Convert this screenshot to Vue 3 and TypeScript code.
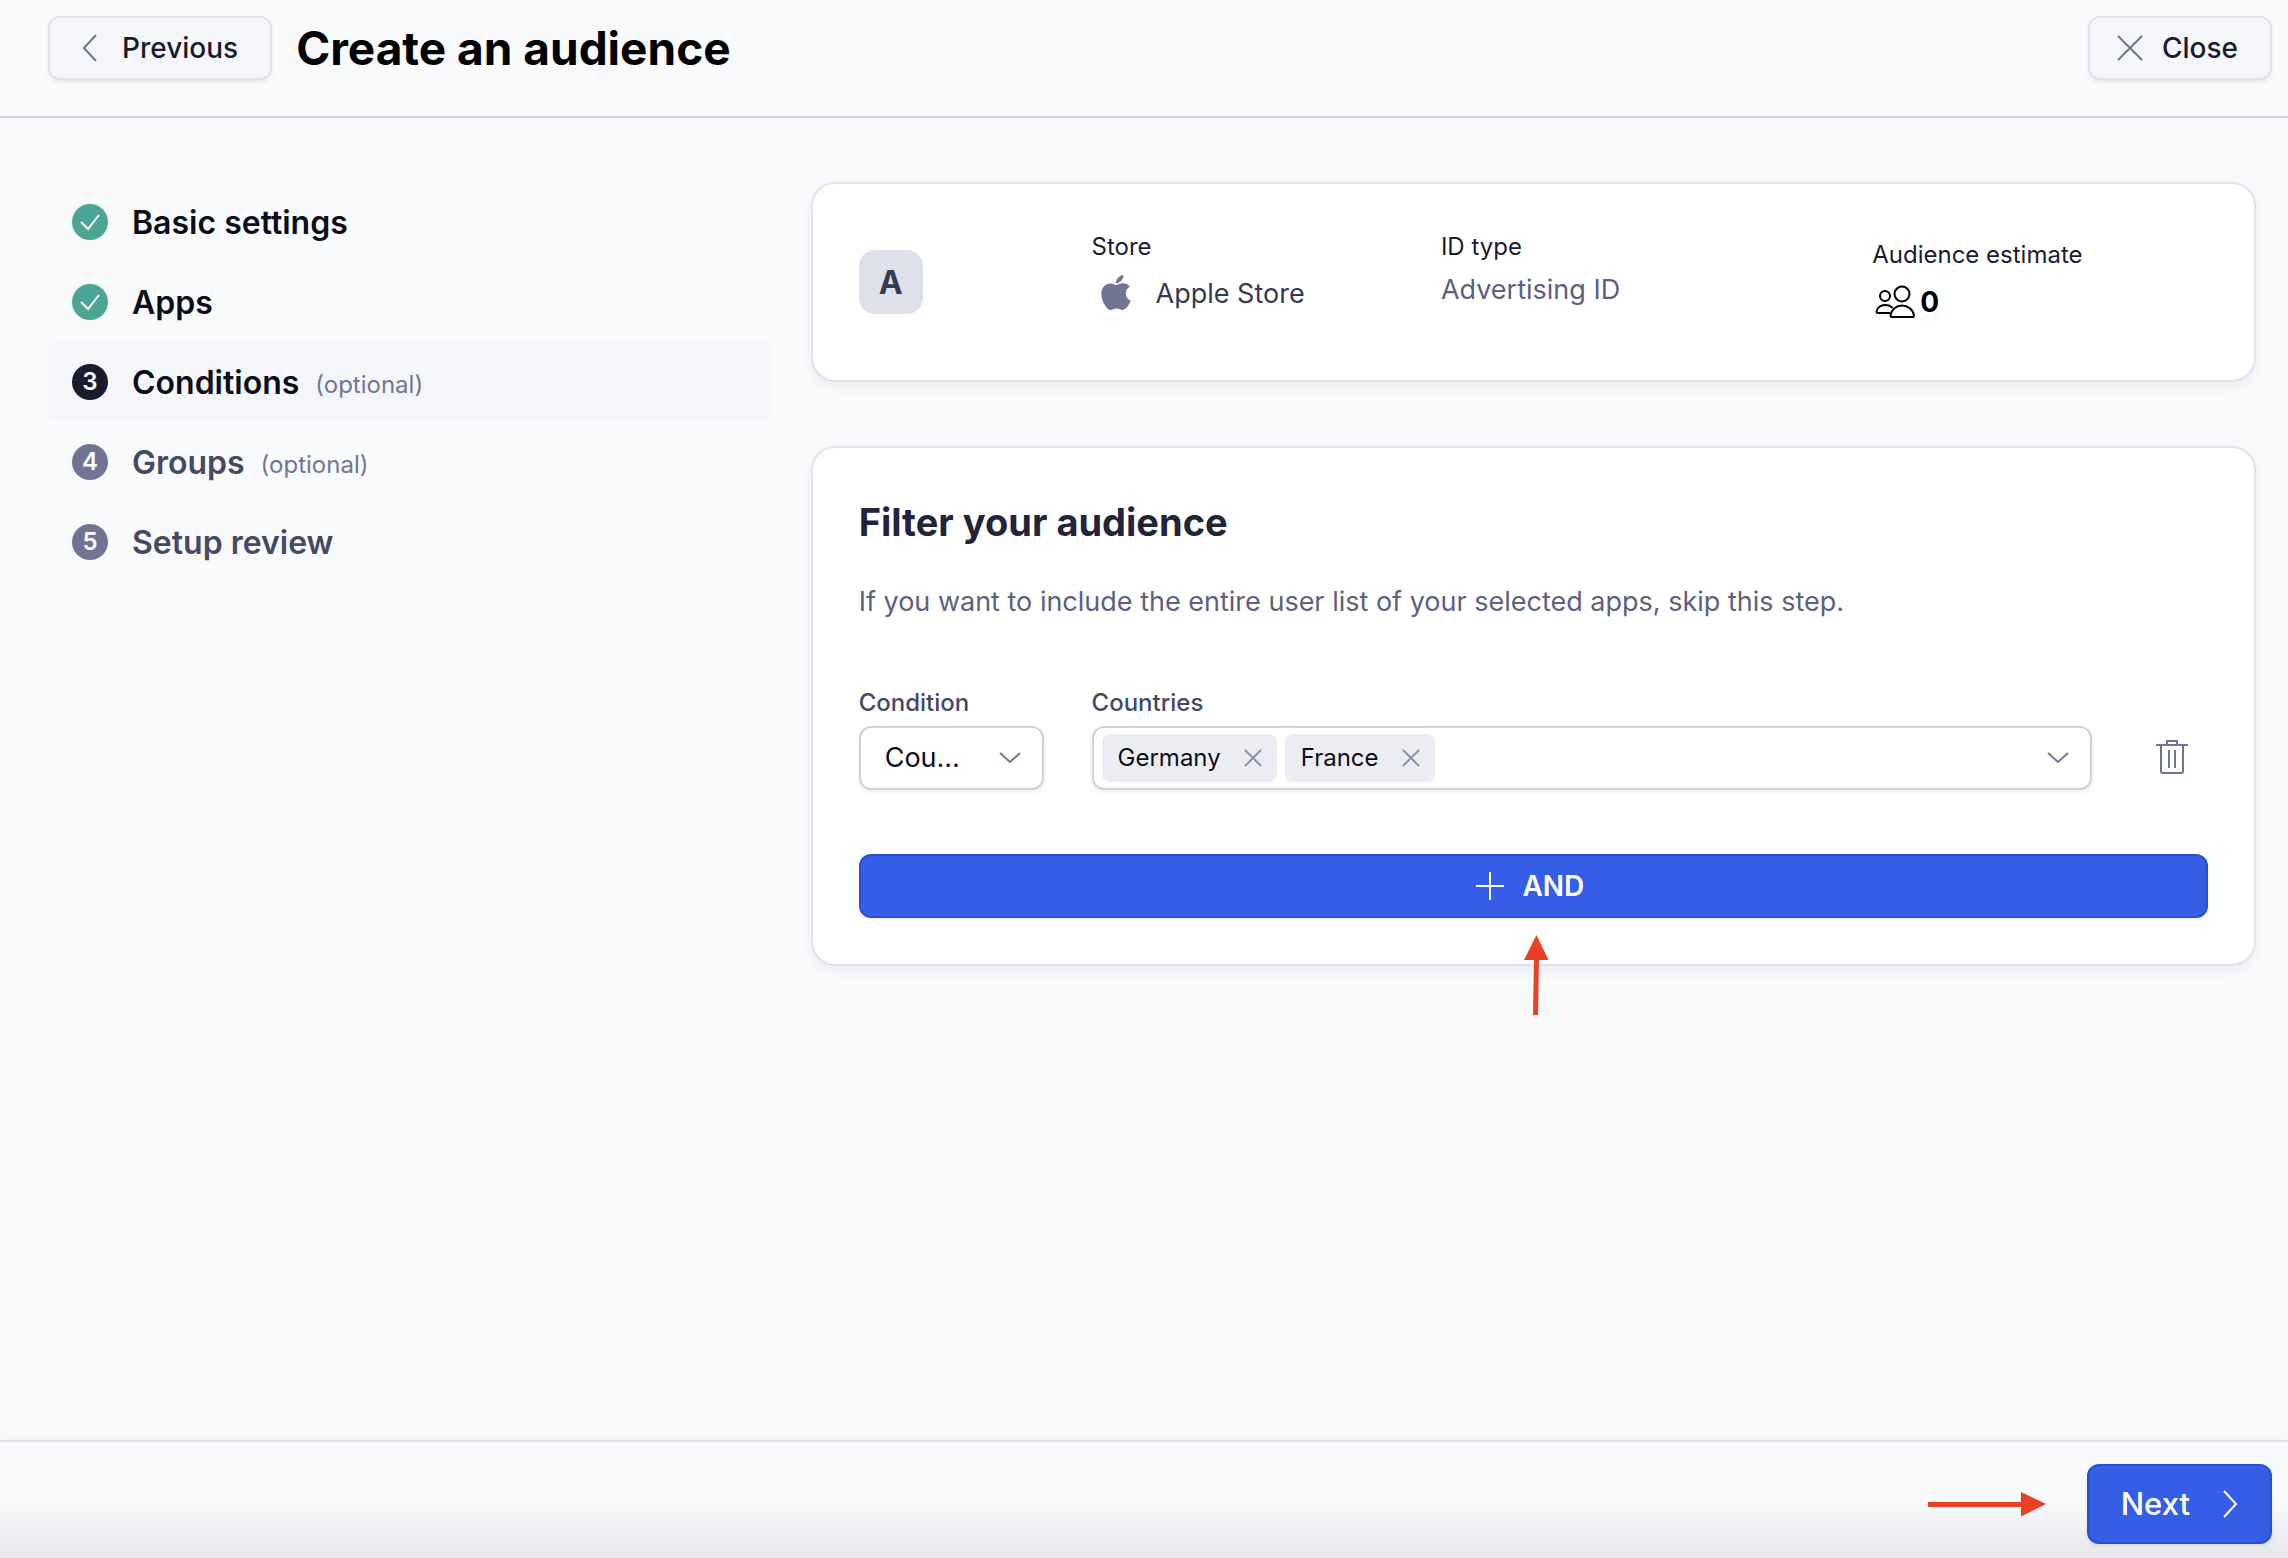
<script setup lang="ts">
import { ref } from 'vue'

interface Step {
  id: number
  label: string
  state: 'done' | 'current' | 'todo'
  optional?: boolean
}

const steps: Step[] = [
  { id: 1, label: 'Basic settings', state: 'done' },
  { id: 2, label: 'Apps', state: 'done' },
  { id: 3, label: 'Conditions', state: 'current', optional: true },
  { id: 4, label: 'Groups', state: 'todo', optional: true },
  { id: 5, label: 'Setup review', state: 'todo' },
]

const condition = ref('country')
const countries = ref<string[]>(['Germany', 'France'])

function removeCountry(name: string) {
  countries.value = countries.value.filter((c) => c !== name)
}
</script>

<template>
  <div class="page">
    <header class="topbar">
      <button type="button" class="btn btn-light">
        <svg class="icon" viewBox="0 0 32 32" aria-hidden="true"><path d="M22 3 L10 16 L22 29" /></svg>
        <span>Previous</span>
      </button>
      <h1>Create an audience</h1>
      <button type="button" class="btn btn-light close">
        <svg class="icon" viewBox="0 0 32 32" aria-hidden="true"><path d="M4 4 L28 28 M28 4 L4 28" /></svg>
        <span>Close</span>
      </button>
    </header>

    <main class="content">
      <nav aria-label="Steps">
        <ol class="steps">
          <li v-for="step in steps" :key="step.id" class="step" :class="step.state">
            <span class="bullet">
              <svg v-if="step.state === 'done'" viewBox="0 0 36 36" aria-hidden="true">
                <path d="M9 18 L16 25 L27 11" />
              </svg>
              <template v-else>{{ step.id }}</template>
            </span>
            <span class="step-label">{{ step.label }}</span>
            <span v-if="step.optional" class="optional">(optional)</span>
          </li>
        </ol>
      </nav>

      <div class="panels">
        <section class="card summary">
          <div class="avatar">A</div>
          <div class="store">
            <div class="caption">Store</div>
            <div class="store-name">
              <svg class="apple" viewBox="0 20 384 512" aria-hidden="true">
                <path d="M318.7 268.7c-.2-36.7 16.4-64.4 50-84.8-18.8-26.9-47.2-41.7-84.7-44.6-35.5-2.8-74.3 20.7-88.5 20.7-15 0-49.4-19.7-76.4-19.7C63.3 141.2 4 184.8 4 273.5q0 39.3 14.4 81.2c12.8 36.7 59 126.7 107.2 125.2 25.2-.6 43-17.900 75.800-17.900 31.800 0 48.300 17.900 76.400 17.900 48.600-.7 90.400-82.500 102.600-119.300-65.200-30.700-61.700-90-61.700-91.900zm-56.600-164.200c27.300-32.400 24.800-61.900 24-72.500-24.100 1.400-52 16.400-67.900 34.900-17.500 19.800-27.800 44.300-25.600 71.900 26.100 2 49.900-11.400 69.500-34.300z" />
              </svg>
              <span>Apple Store</span>
            </div>
          </div>
          <div class="id-type">
            <div class="caption">ID type</div>
            <div class="id-value">Advertising ID</div>
          </div>
          <div class="estimate">
            <div class="caption">Audience estimate</div>
            <div class="estimate-value">
              <svg class="people" viewBox="0 0 48 40" aria-hidden="true">
                <circle cx="13" cy="14" r="5" />
                <circle cx="30" cy="12" r="7.5" />
                <path d="M18.500 31 H6 Q4.500 31 4.500 29.500 C5 25.500 9 23 13 23 C16.500 23 19 24 20.500 26" />
                <path d="M19.500 35 Q18.500 35 18.500 33.500 C19.500 27.500 24 23.500 30 23.500 C36 23.500 41 27.500 42 33.500 Q42 35 41 35 Z" />
              </svg>
              <strong>0</strong>
            </div>
          </div>
        </section>

        <section class="card filter">
          <h2>Filter your audience</h2>
          <p>If you want to include the entire user list of your selected apps, skip this step.</p>

          <div class="row">
            <div class="field condition">
              <label for="condition">Condition</label>
              <div class="control">
                <select id="condition" v-model="condition">
                  <option value="country">Cou...</option>
                </select>
                <svg class="chevron" viewBox="0 0 32 32" aria-hidden="true"><path d="M6 11 L16 20 L26 11" /></svg>
              </div>
            </div>
            <div class="field countries">
              <label for="countries">Countries</label>
              <div class="control">
                <div class="multi">
                  <span v-for="name in countries" :key="name" class="chip">
                    {{ name }}
                    <button type="button" :aria-label="`Remove ${name}`" @click="removeCountry(name)">
                      <svg viewBox="0 0 32 32" aria-hidden="true"><path d="M8 8 L24 24 M24 8 L8 24" /></svg>
                    </button>
                  </span>
                  <input id="countries" type="text" autocomplete="off" />
                </div>
                <svg class="chevron" viewBox="0 0 32 32" aria-hidden="true"><path d="M6 11 L16 20 L26 11" /></svg>
              </div>
            </div>
            <button type="button" class="trash" aria-label="Delete condition">
              <svg viewBox="0 0 40 40" aria-hidden="true">
                <path d="M4 7 H36 M15 7 V3 H25 V7 M9 7 V33 Q9 35 11 35 H29 Q31 35 31 33 V7 M17 12 V30 M23 12 V30" />
              </svg>
            </button>
          </div>

          <div class="and-wrap">
            <button type="button" class="btn btn-primary and">
              <svg class="icon" viewBox="0 0 32 32" aria-hidden="true"><path d="M2 16 H30 M16 2 V30" /></svg>
              <span>AND</span>
            </button>
            <svg class="arrow-up" viewBox="0 0 26 82" aria-hidden="true">
              <path d="M13.500 1 L25.500 26 H1 Z" />
              <path class="shaft" d="M13.500 24 L12.500 81" />
            </svg>
          </div>
        </section>
      </div>
    </main>

    <footer class="bottombar">
      <svg class="arrow-right" viewBox="0 0 120 26" aria-hidden="true">
        <path d="M119 13 L94 25.500 V1 Z" />
        <path class="shaft" d="M1 13.500 H96" />
      </svg>
      <button type="button" class="btn btn-primary next">
        <span>Next</span>
        <svg class="icon" viewBox="0 0 32 32" aria-hidden="true"><path d="M10 3 L22 16 L10 29" /></svg>
      </button>
    </footer>
  </div>
</template>

<style>
body {
  margin: 0;
  background: #f9fafc;
}
</style>

<style scoped>
.page {
  box-sizing: border-box;
  min-height: 100vh;
  display: flex;
  flex-direction: column;
  background: #f9fafc;
  color: #1a1c2e;
  font-family: Inter, 'Liberation Sans', sans-serif;
  font-size: 27px;
  line-height: 40px;
}

.page *,
.page *::before {
  box-sizing: border-box;
}

button,
input,
select {
  font: inherit;
  color: inherit;
  margin: 0;
}

svg {
  display: block;
  flex: none;
  fill: none;
  stroke: currentColor;
  stroke-width: 2;
}

.topbar {
  display: flex;
  align-items: center;
  gap: 24px;
  padding: 16px 16px 36px 48px;
  border-bottom: 2px solid #d0d0e1;
}

h1 {
  flex: 1;
  margin: 0;
  color: #000;
  font-size: 46px;
  line-height: 64px;
  font-weight: 700;
}

.btn {
  display: flex;
  align-items: center;
  gap: 16px;
  height: 64px;
  padding: 0 32px 0 24px;
  border: 2px solid #e0e1ec;
  border-radius: 12px;
  font-size: 28px;
  font-weight: 500;
  box-shadow: 0 2px 4px rgba(26, 28, 46, 0.08);
}

.btn-light {
  background: #f5f6fa;
}

.btn-light .icon {
  color: #717593;
}

.icon {
  width: 32px;
  height: 32px;
}

.btn-primary {
  background: #355de6;
  border-color: #2b4fd0;
  color: #fff;
}

.content {
  flex: 1;
  display: grid;
  grid-template-columns: 1fr 2fr;
  gap: 40px;
  align-items: start;
  padding: 64px 32px 64px 48px;
}

.steps {
  margin: 0;
  padding: 0;
  list-style: none;
}

.step {
  display: flex;
  align-items: center;
  height: 80px;
  padding: 0 24px;
  border-radius: 8px;
  color: #454963;
}

.step.done,
.step.current {
  color: #0c0e1a;
}

.step.current {
  background: #f5f6fa;
}

.bullet {
  width: 36px;
  height: 36px;
  margin-right: 24px;
  border-radius: 50%;
  background: #717593;
  color: #fff;
  font-size: 24px;
  line-height: 36px;
  font-weight: 600;
  text-align: center;
}

.done .bullet {
  background: #4aa594;
}

.current .bullet {
  background: #1a1c2e;
}

.step-label {
  padding-top: 2px;
  font-size: 32px;
  font-weight: 600;
}

.optional {
  margin-left: 16px;
  padding-top: 6px;
  color: #717593;
  font-size: 24px;
}

.panels {
  display: flex;
  flex-direction: column;
  gap: 64px;
  min-width: 0;
}

.card {
  padding: 46px;
  background: #fff;
  border: 2px solid #e0e1ec;
  border-radius: 24px;
  box-shadow: 0 6px 16px rgba(26, 28, 46, 0.05);
}

.summary,
.row {
  display: grid;
  grid-template-columns: repeat(12, minmax(0, 1fr));
  column-gap: 48px;
}

.summary {
  min-height: 200px;
}

.avatar {
  grid-column: 1 / 3;
  align-self: center;
  width: 64px;
  height: 64px;
  border-radius: 16px;
  background: #dfe1ea;
  color: #353a52;
  font-size: 32px;
  line-height: 66px;
  font-weight: 700;
  text-align: center;
}

.store {
  grid-column: 3 / 6;
}

.id-type {
  grid-column: 6 / 9;
}

.estimate {
  grid-column: 9 / 13;
  padding: 8px 0 0 82px;
}

.caption {
  height: 32px;
  font-size: 24px;
  line-height: 34px;
}

.store-name {
  display: flex;
  align-items: center;
  gap: 16px;
  height: 64px;
  color: #353a52;
}

.apple {
  width: 48px;
  height: 40px;
  fill: #717593;
  stroke: none;
}

.id-value {
  padding-top: 8px;
  color: #5c617e;
}

.estimate-value {
  display: flex;
  align-items: center;
  height: 64px;
  color: #000;
  font-size: 28px;
}

.people {
  width: 48px;
  height: 40px;
}

h2 {
  margin: 0;
  color: #22253a;
  font-size: 38px;
  line-height: 56px;
  font-weight: 700;
}

.filter p {
  margin: 32px 0 64px;
  color: #5c617e;
}

.field label {
  display: block;
  height: 40px;
  color: #454963;
  font-size: 24px;
  line-height: 34px;
  font-weight: 500;
}

.condition {
  grid-column: 1 / 3;
}

.countries {
  grid-column: 3 / 12;
}

.control {
  position: relative;
}

.control select,
.multi {
  width: 100%;
  height: 64px;
  border: 2px solid #cfd0e2;
  border-radius: 12px;
  background: #fff;
  box-shadow: 0 2px 4px rgba(26, 28, 46, 0.08);
}

.control select {
  appearance: none;
  padding: 0 56px 0 24px;
  color: #0c0e1a;
}

.chevron {
  position: absolute;
  top: 16px;
  right: 18px;
  width: 32px;
  height: 32px;
  color: #717593;
  pointer-events: none;
}

.multi {
  display: flex;
  align-items: center;
  gap: 8px;
  padding: 0 56px 0 8px;
}

.chip {
  display: flex;
  align-items: center;
  gap: 16px;
  height: 48px;
  padding: 0 8px 0 16px;
  border-radius: 8px;
  background: #ecedf3;
  color: #0c0e1a;
  font-size: 24px;
}

.chip button {
  width: 32px;
  height: 32px;
  padding: 0;
  border: 0;
  background: none;
  color: #8b8fae;
}

.multi input {
  flex: 1;
  min-width: 0;
  height: 48px;
  padding: 0;
  border: 0;
  outline: 0;
  background: none;
}

.trash {
  grid-column: 12 / 13;
  align-self: end;
  height: 64px;
  padding: 0 0 0 12px;
  border: 0;
  background: none;
  color: #717593;
}

.trash svg {
  width: 40px;
  height: 40px;
}

.and-wrap {
  position: relative;
  margin-top: 64px;
}

.and {
  width: 100%;
  justify-content: center;
  font-weight: 600;
}

.arrow-up,
.arrow-right {
  fill: #ea4025;
  stroke: none;
}

.shaft {
  stroke: #ea4025;
  stroke-width: 5;
}

.arrow-up {
  position: absolute;
  top: 80px;
  left: 50%;
  width: 26px;
  height: 82px;
  margin-left: -10px;
}

.bottombar {
  display: flex;
  align-items: center;
  justify-content: flex-end;
  gap: 40px;
  padding: 22px 16px 14px;
  border-top: 2px solid #e0e1ec;
  background: linear-gradient(#f9fafc 50%, #e6e7ea);
  box-shadow: 0 -4px 16px rgba(26, 28, 46, 0.04);
}

.arrow-right {
  width: 120px;
  height: 26px;
}

.next {
  height: 80px;
  gap: 24px;
  padding: 0 24px 0 32px;
  font-size: 31px;
  line-height: 42px;
}
</style>
